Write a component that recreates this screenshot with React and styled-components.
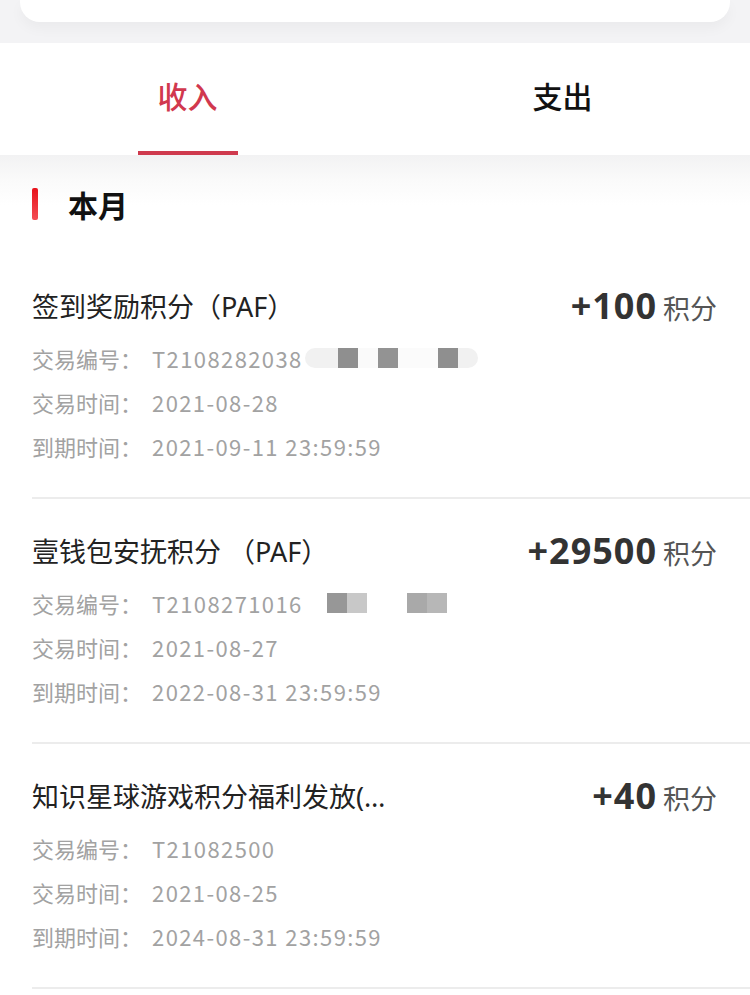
import React from "react";
import styled, { createGlobalStyle } from "styled-components";

const GlobalStyle = createGlobalStyle`
  body {
    margin: 0;
    background: #fff;
    font-family: "Noto Sans CJK SC", "Noto Sans", sans-serif;
  }
`;

const Page = styled.div`
  width: 750px;
  min-height: 995px;
  background: #fff;
  overflow: hidden;
`;

const TopArea = styled.div`
  background: #f3f3f5;
  padding: 0 20px 21px;
`;

const Card = styled.div`
  height: 22px;
  background: #fff;
  border-radius: 0 0 20px 20px;
  box-shadow: 0 6px 14px rgba(0, 0, 0, 0.04);
`;

const Tabs = styled.div`
  display: flex;
  height: 112px;
  background: #fff;
  position: relative;
  z-index: 1;
`;

const Tab = styled.div`
  flex: 1;
  display: flex;
  flex-direction: column;
  align-items: center;
  justify-content: flex-end;
`;

const TabLabel = styled.div`
  font-size: 30px;
  line-height: 40px;
  font-weight: 500;
  color: ${p => (p.$active ? "#d1384e" : "#111")};
  margin-bottom: 36px;
`;

const TabLine = styled.div`
  width: 100px;
  height: 4px;
  background: ${p => (p.$active ? "#cf3a4e" : "transparent")};
`;

const Content = styled.div`
  background: linear-gradient(#f2f2f3 0px, #fafafa 25px, #fff 50px);
  padding-top: 33px;
`;

const SectionHead = styled.div`
  display: flex;
  align-items: center;
  height: 32px;
  margin: 0 0 34px 32px;
`;

const RedBar = styled.div`
  width: 6px;
  height: 32px;
  border-radius: 2px;
  background: linear-gradient(#e8121b, #f34e55);
`;

const SectionTitle = styled.div`
  margin-left: 30px;
  font-size: 30px;
  font-weight: 700;
  color: #111;
  line-height: 44px;
`;

const Item = styled.div`
  margin-left: 32px;
  padding: 33px 33px 29px 0;
  border-bottom: 2px solid #ececec;
`;

const TitleRow = styled.div`
  display: flex;
  align-items: center;
  justify-content: space-between;
  height: 40px;
  margin-bottom: 9px;
`;

const Title = styled.div`
  font-family: "Noto Sans", "Noto Sans CJK SC", sans-serif;
  font-size: 27px;
  color: #222;
  line-height: 40px;
  max-width: 362px;
  white-space: nowrap;
  overflow: hidden;
  text-overflow: ellipsis;
`;

const Amount = styled.div`
  display: flex;
  align-items: baseline;
  white-space: nowrap;
  margin-top: -4px;
`;

const Points = styled.span`
  font-family: "Open Sans", sans-serif;
  font-weight: 700;
  font-size: 36px;
  letter-spacing: 1px;
  color: #333;
  margin-right: 6px;
`;

const Unit = styled.span`
  font-size: 27px;
  color: #555;
`;

const Detail = styled.div`
  display: flex;
  align-items: center;
  font-size: 22px;
  line-height: 44px;
  height: 44px;
  color: #a2a2a2;
`;

const Value = styled.span`
  margin-left: 10px;
  letter-spacing: 1.4px;
`;

const Mosaic = styled.div`
  display: inline-flex;
  height: 20px;
  margin-left: ${p => p.$offset}px;
`;

const Cell = styled.div`
  width: ${p => p.$w}px;
  height: 20px;
  background: ${p => p.$c};
  &:first-child {
    border-radius: ${p => (p.$round ? "10px 0 0 10px" : "0")};
  }
  &:last-child {
    border-radius: ${p => (p.$round ? "0 10px 10px 0" : "0")};
  }
`;

const items = [
  {
    title: "签到奖励积分（PAF）",
    points: "+100",
    no: "T2108282038",
    date: "2021-08-28",
    expire: "2021-09-11 23:59:59",
    mosaic: {
      offset: 2,
      round: true,
      cells: [
        [33, "#f1f1f1"],
        [20, "#8f8f8f"],
        [20, "#fafafa"],
        [20, "#939393"],
        [40, "#fbfbfb"],
        [20, "#8f8f8f"],
        [20, "#f1f1f1"]
      ]
    }
  },
  {
    title: "壹钱包安抚积分 （PAF）",
    points: "+29500",
    no: "T2108271016",
    date: "2021-08-27",
    expire: "2022-08-31 23:59:59",
    mosaic: {
      offset: 24,
      round: false,
      cells: [
        [20, "#979797"],
        [20, "#c8c8c8"],
        [40, "#ffffff"],
        [20, "#a9a9a9"],
        [20, "#b7b7b7"]
      ]
    }
  },
  {
    title: "知识星球游戏积分福利发放(PAF)",
    points: "+40",
    no: "T21082500",
    date: "2021-08-25",
    expire: "2024-08-31 23:59:59"
  }
];

const Record = ({ item }) => (
  <Item>
    <TitleRow>
      <Title>{item.title}</Title>
      <Amount>
        <Points>{item.points}</Points>
        <Unit>积分</Unit>
      </Amount>
    </TitleRow>
    <Detail>
      交易编号：<Value>{item.no}</Value>
      {item.mosaic && (
        <Mosaic $offset={item.mosaic.offset}>
          {item.mosaic.cells.map(([w, c], i) => (
            <Cell key={i} $w={w} $c={c} $round={item.mosaic.round} />
          ))}
        </Mosaic>
      )}
    </Detail>
    <Detail>
      交易时间：<Value>{item.date}</Value>
    </Detail>
    <Detail>
      到期时间：<Value>{item.expire}</Value>
    </Detail>
  </Item>
);

export default function App() {
  return (
    <Page>
      <GlobalStyle />
      <TopArea>
        <Card />
      </TopArea>
      <Tabs>
        <Tab>
          <TabLabel $active>收入</TabLabel>
          <TabLine $active />
        </Tab>
        <Tab>
          <TabLabel>支出</TabLabel>
          <TabLine />
        </Tab>
      </Tabs>
      <Content>
        <SectionHead>
          <RedBar />
          <SectionTitle>本月</SectionTitle>
        </SectionHead>
        {items.map(item => (
          <Record key={item.no} item={item} />
        ))}
      </Content>
    </Page>
  );
}
